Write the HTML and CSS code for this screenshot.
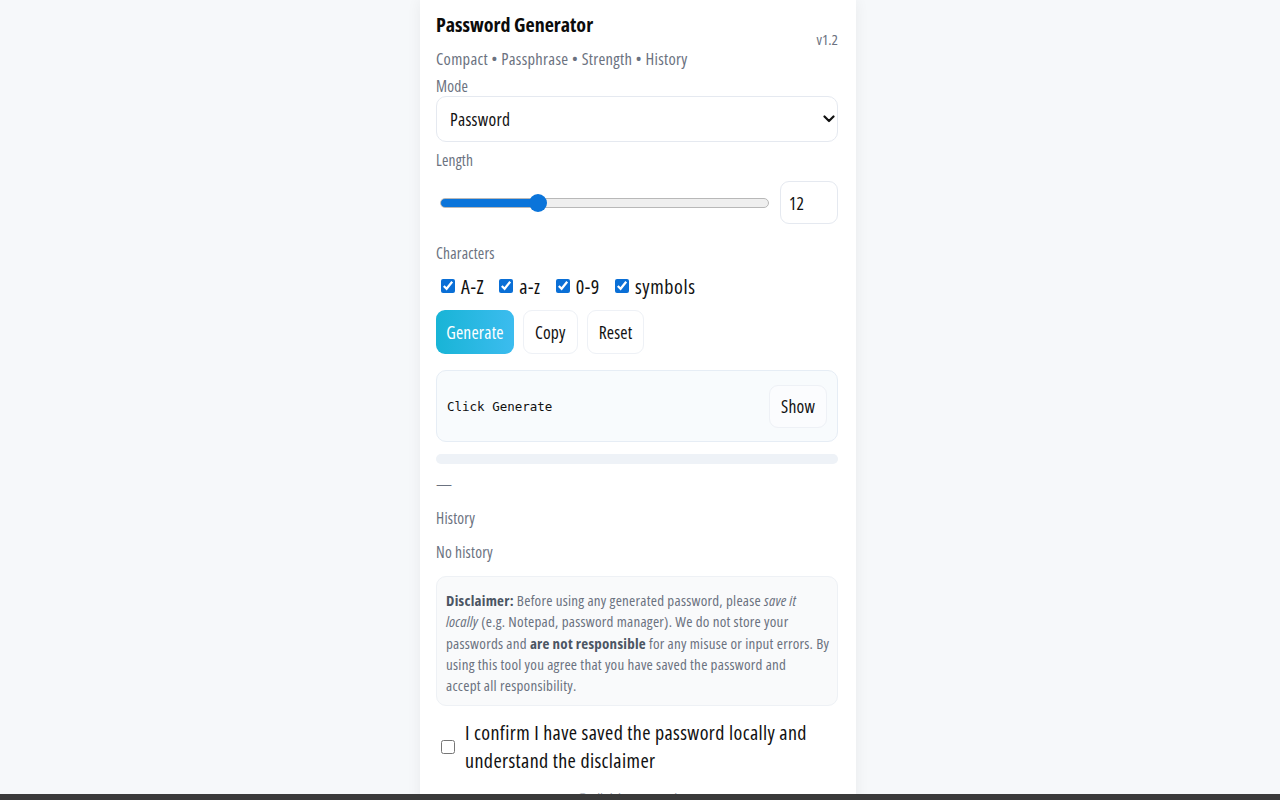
FILE: index.html
```html
<!DOCTYPE html>
<html lang="en">
<head>
<meta charset="utf-8">
<title>Password Generator</title>
<link rel="stylesheet" href="styles.css">
</head>
<body>
<div class="page">
  <main class="card">
    <header class="head">
      <div class="head-text">
        <h1 class="title">Password Generator</h1>
        <p class="sub">Compact • Passphrase • Strength • History</p>
      </div>
      <span class="ver">v1.2</span>
    </header>

    <label class="lbl" for="mode">Mode</label>
    <div class="select-wrap">
      <select id="mode" class="select">
        <option>Password</option>
        <option>Passphrase</option>
      </select>
      <svg class="chev" width="12" height="8" viewBox="0 0 12 8"><path d="M1.5 1.5 6 6l4.5-4.5" fill="none" stroke="#111" stroke-width="2.2" stroke-linecap="round" stroke-linejoin="round"/></svg>
    </div>

    <label class="lbl lbl-length">Length</label>
    <div class="len-row">
      <input class="range" type="range" min="4" max="32" value="12">
      <input class="num" type="text" value="12">
    </div>

    <div class="lbl lbl-chars">Characters</div>
    <div class="checks">
      <label class="chk"><input type="checkbox" checked><span>A-Z</span></label>
      <label class="chk"><input type="checkbox" checked><span>a-z</span></label>
      <label class="chk"><input type="checkbox" checked><span>0-9</span></label>
      <label class="chk"><input type="checkbox" checked><span>symbols</span></label>
    </div>

    <div class="btns">
      <button class="btn btn-primary">Generate</button>
      <button class="btn">Copy</button>
      <button class="btn">Reset</button>
    </div>

    <div class="output">
      <code class="out-text">Click Generate</code>
      <button class="btn btn-show">Show</button>
    </div>

    <div class="meter"></div>
    <div class="meter-label">—</div>

    <div class="lbl lbl-history">History</div>
    <div class="lbl lbl-nohist">No history</div>

    <div class="disclaimer">
      <b>Disclaimer:</b> Before using any generated password, please <i>save it</i><br>
      <i>locally</i> (e.g. Notepad, password manager). We do not store your<br>
      passwords and <b>are not responsible</b> for any misuse or input errors. By<br>
      using this tool you agree that you have saved the password and<br>
      accept all responsibility.
    </div>

    <label class="confirm">
      <input type="checkbox">
      <span>I confirm I have saved the password locally and<br>understand the disclaimer</span>
    </label>

    <footer class="foot">© All rights reserved</footer>
  </main>
</div>
<div class="bottom-bar"></div>
</body>
</html>
```

FILE: styles.css
```css
* { box-sizing: border-box; }

html, body {
  margin: 0;
  padding: 0;
  background: #f6f8fa;
  height: 100%;
  overflow: hidden;
}

body {
  font-family: "Open Sans", "Roboto", "Liberation Sans", sans-serif;
  font-stretch: 75%;
  color: #111;
}

.page {
  display: flex;
  justify-content: center;
  padding-right: 4px;
}

.card {
  width: 436px;
  min-height: 860px;
  background: #fff;
  box-shadow: 0 0 14px rgba(15, 23, 42, 0.06);
  padding: 13px 18px 0 16px;
  display: flex;
  flex-direction: column;
}

.head {
  display: flex;
  justify-content: space-between;
  align-items: center;
}

.title {
  margin: 0;
  font-size: 20px;
  line-height: 24px;
  font-weight: 700;
  color: #0b0b0b;
}

.sub {
  margin: 12px 0 0;
  font-size: 16.5px;
  letter-spacing: 0.3px;
  line-height: 20px;
  color: #6b7280;
}

.ver {
  font-size: 15px;
  color: #6b7280;
  margin-top: -4px;
}

.lbl {
  font-size: 15.5px;
  letter-spacing: 0.2px;
  line-height: 20px;
  color: #6b7280;
}

.head + .lbl { margin-top: 7px; }

.select-wrap {
  position: relative;
  height: 46px;
}

.select {
  appearance: none;
  -webkit-appearance: none;
  width: 100%;
  height: 46px;
  border: 1px solid #e5e9f0;
  border-radius: 10px;
  background: #fff;
  padding: 0 13px;
  font-family: inherit;
  font-stretch: inherit;
  font-size: 17.5px;
  letter-spacing: 0.3px;
  color: #111;
}

.chev {
  position: absolute;
  right: 3px;
  top: 19px;
}

.lbl-length { margin-top: 8px; }

.len-row {
  margin-top: 11px;
  display: flex;
  align-items: center;
  gap: 11px;
}

.range {
  -webkit-appearance: none;
  appearance: none;
  flex: 1;
  margin: 0 0 0 4px;
  height: 14px;
  background: transparent;
}

.range::-webkit-slider-runnable-track {
  height: 10px;
  border-radius: 5px;
  border: 1px solid #b8b8b8;
  background: linear-gradient(to right, #0a74da 0 29%, #efefef 29% 100%);
}

.range::-webkit-slider-thumb {
  -webkit-appearance: none;
  width: 18px;
  height: 18px;
  margin-top: -5px;
  border-radius: 50%;
  background: #0a74da;
  border: none;
}

.num {
  width: 58px;
  height: 43px;
  border: 1px solid #e5e9f0;
  border-radius: 9px;
  padding: 0 8px;
  font-family: inherit;
  font-stretch: inherit;
  font-size: 17.5px;
  color: #111;
  background: #fff;
}

.lbl-chars { margin-top: 19px; }

.checks {
  margin-top: 10px;
  display: flex;
  align-items: center;
  gap: 10px;
  height: 26px;
}

.chk {
  display: flex;
  align-items: center;
  gap: 6px;
  font-size: 20px;
  letter-spacing: 0.6px;
  color: #111;
}

.chk input,
.confirm input {
  width: 14px;
  height: 14px;
  margin: 0 0 0 5px;
  accent-color: #0a6fd6;
}

.btns {
  margin-top: 11px;
  display: flex;
  gap: 9px;
}

.btn {
  height: 44px;
  padding: 0 11px;
  border: 1px solid #eef1f6;
  border-radius: 9px;
  background: #fff;
  font-family: inherit;
  font-stretch: inherit;
  font-size: 17.5px;
  letter-spacing: 0.2px;
  color: #111;
}

.btn-primary {
  border: none;
  width: 78px;
  padding: 0;
  color: #fff;
  background: linear-gradient(90deg, #18b4d6, #3cbcef);
}

.output {
  margin-top: 16px;
  height: 72px;
  border: 1px solid #e6edf5;
  border-radius: 10px;
  background: #f8fbfd;
  padding: 0 10px 0 10px;
  display: flex;
  align-items: center;
  justify-content: space-between;
}

.out-text {
  font-family: "DejaVu Sans Mono", "Liberation Mono", monospace;
  font-stretch: normal;
  font-size: 12.5px;
  color: #111;
}

.btn-show {
  height: 43px;
  padding: 0 11px;
  background: #fbfcfe;
}

.meter {
  margin-top: 12px;
  height: 10px;
  border-radius: 5px;
  background: #eef2f7;
}

.meter-label {
  margin-top: 10px;
  font-size: 16px;
  line-height: 20px;
  color: #6b7280;
}

.lbl-history { margin-top: 14px; }
.lbl-nohist { margin-top: 14px; }

.disclaimer {
  margin-top: 14px;
  border: 1px solid #eef1f5;
  border-radius: 10px;
  background: #f9fafb;
  padding: 13px 9px 9px 9px;
  font-size: 15px;
  letter-spacing: 0.25px;
  line-height: 21.3px;
  color: #6b7280;
  white-space: nowrap;
}

.disclaimer b { color: #4b5563; }

.confirm {
  margin-top: 13px;
  display: flex;
  align-items: center;
  gap: 10px;
  font-size: 20px;
  letter-spacing: 0.4px;
  line-height: 28px;
  color: #111;
}

.foot {
  margin-top: 14px;
  text-align: center;
  font-size: 14px;
  color: #9ca3af;
  padding-right: 20px;
}

.bottom-bar {
  position: fixed;
  left: 0;
  right: 0;
  bottom: 0;
  height: 6px;
  background: #3a3a3a;
}
```
